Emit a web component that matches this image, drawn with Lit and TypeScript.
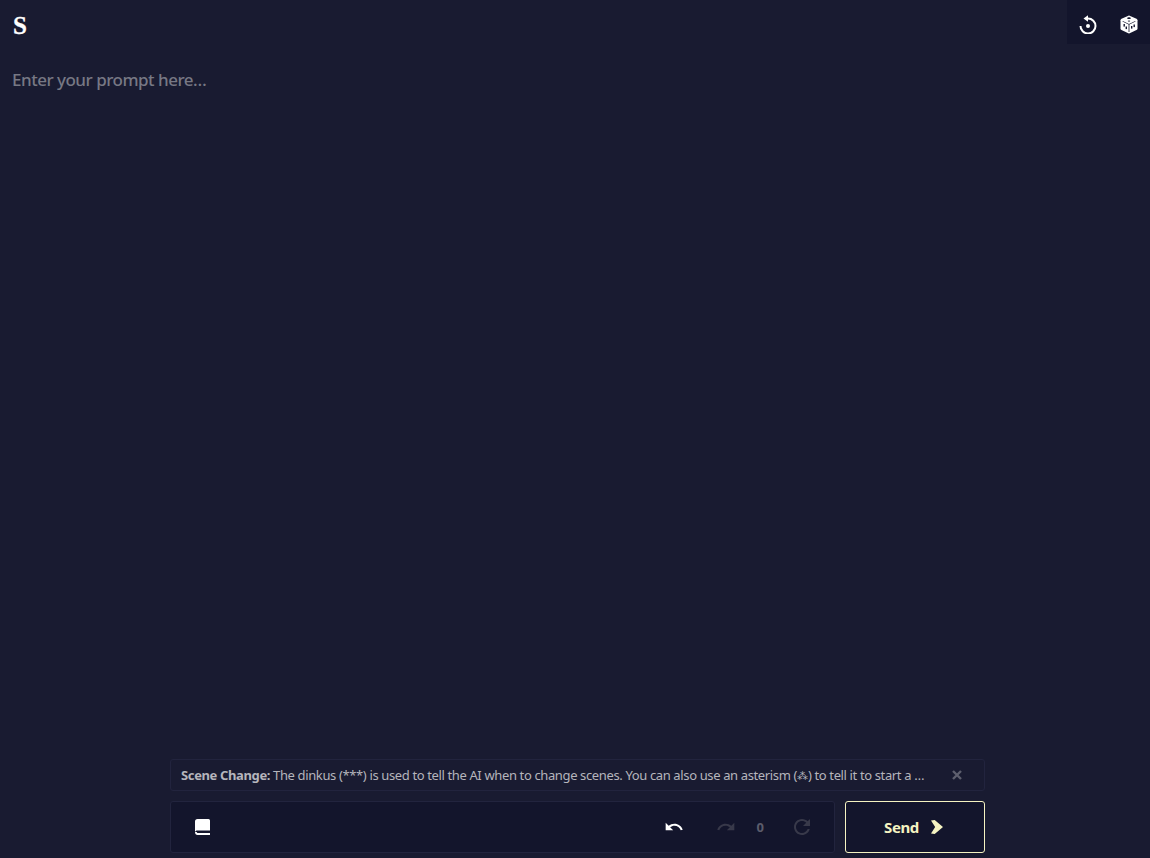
import { LitElement, html, css } from "lit";
import { customElement } from "lit/decorators.js";

@customElement("app-root")
export class AppRoot extends LitElement {
  static styles = css`
    :host {
      display: flex;
      flex-direction: column;
      height: 100vh;
      background: #191b31;
      font-family: "Noto Sans", "Lato", sans-serif;
      position: relative;
      overflow: hidden;
    }
    .logo {
      font-family: "Liberation Serif", serif;
      font-weight: 700;
      font-size: 25px;
      line-height: 28px;
      color: #fff;
      -webkit-text-stroke: 0.3px #fff;
      padding: 12px 0 0 13px;
      height: 40px;
      box-sizing: border-box;
    }
    .prompt {
      flex: 1;
      padding: 28px 12px 0;
      font-size: 17px;
      line-height: 24px;
      letter-spacing: -0.5px;
      font-weight: 500;
      color: #777884;
    }
    .tools {
      position: absolute;
      top: 0;
      right: 0;
      width: 83px;
      height: 44px;
      background: #13152c;
      display: flex;
      align-items: center;
      box-sizing: border-box;
      padding-top: 4px;
    }
    .tools span {
      flex: 1;
      display: flex;
      justify-content: center;
    }
    .dock {
      width: 815px;
      margin: 0 0 5px 170px;
      display: flex;
      flex-direction: column;
      gap: 10px;
    }
    .tip {
      height: 32px;
      box-sizing: border-box;
      border: 1px solid #22243e;
      border-radius: 3px;
      display: flex;
      align-items: center;
      padding: 0 22px 0 10px;
      font-size: 13px;
      letter-spacing: -0.37px;
      color: #b5b5bc;
      gap: 22px;
    }
    .tip p {
      margin: 0;
      flex: 1;
      white-space: nowrap;
      overflow: hidden;
      text-overflow: ellipsis;
    }
    .tip b { font-weight: 700; }
    .mark { font-family: "DejaVu Sans", sans-serif; font-size: 11px; letter-spacing: 0; }
    .row { display: flex; gap: 10px; height: 52px; }
    .bar {
      flex: 1;
      background: #13152c;
      border: 1px solid #22243e;
      border-radius: 3px;
      display: flex;
      align-items: center;
      padding: 0 20px 0 24px;
      box-sizing: border-box;
    }
    .spacer { flex: 1; }
    .count {
      font-size: 13px;
      font-weight: 700;
      color: #5b5c6b;
      margin: 0 26px 0 21px;
    }
    .send {
      width: 140px;
      background: #13152c;
      border: 1px solid #f5f3c2;
      border-radius: 3px;
      box-sizing: border-box;
      display: flex;
      align-items: center;
      justify-content: center;
      gap: 12px;
      padding-right: 3px;
      color: #f5f3c2;
      font-size: 15px;
      letter-spacing: -0.4px;
      font-weight: 700;
    }
    svg { display: block; }
    .undo { margin-right: 32px; }
  `;

  render() {
    return html`
      <div class="logo">S</div>
      <div class="prompt">Enter your prompt here…</div>
      <div class="tools">
        <span>
          <svg width="18" height="19" viewBox="0 0 18 19" fill="none" stroke="#fff" stroke-width="2">
            <path d="M9 3.500A7.500 7.500 0 1 1 1.500 11" />
            <path d="M9 .2 4.500 3.500 9 6.800z" fill="#fff" stroke="none" />
            <circle cx="9" cy="11" r="2" fill="#fff" stroke="none" />
          </svg>
        </span>
        <span>
          <svg width="18" height="19" viewBox="0 0 18 19">
            <path d="M9 .5 16.500 3.800Q17.500 4.300 17.500 5.300V13.500Q17.500 14.500 16.500 15L9.700 18.300Q9 18.600 8.300 18.300L1.500 15Q.5 14.500 .5 13.500V5.300Q.5 4.300 1.500 3.800z" fill="#fff" />
            <g fill="#13152c">
              <path d="M2.800 6 9 9l6.200-3 .3.600L9.400 9.600V17h-.8V9.600L2.500 6.600z" />
              <ellipse cx="9" cy="3.200" rx="1.800" ry=".9" />
              <ellipse cx="9" cy="6" rx="1.200" ry=".6" />
              <rect x="3.500" y="9" width="1.400" height="2.600" />
              <rect x="5.600" y="11.500" width="1.400" height="2.600" />
              <rect x="11" y="11" width="1.400" height="2.600" />
              <rect x="13.500" y="9.500" width="1.400" height="2.600" />
            </g>
          </svg>
        </span>
      </div>
      <div class="dock">
        <div class="tip">
          <p><b>Scene Change:</b> The dinkus (***) is used to tell the AI when to change scenes. You can also use an asterism (<span class="mark">⁂</span>) to tell it to start a new scene entirely.</p>
          <svg width="10" height="10" viewBox="0 0 10 10" stroke="#5e5f6e" stroke-width="2.400"><path d="M1 1l8 8M9 1l-8 8" /></svg>
        </div>
        <div class="row">
          <div class="bar">
            <svg width="15" height="16" viewBox="0 0 15 16" fill="#fff">
              <path d="M2.500 0h11A1.500 1.500 0 0 1 15 1.500V11.500H2.500C1.200 11.500 .7 12 .5 12.500H0V2.500A2.500 2.500 0 0 1 2.500 0z" />
              <path d="M0 13C0 14.800 1 16 2.500 16H15V14H3C2.200 14 1.800 13.600 1.800 13z" />
            </svg>
            <div class="spacer"></div>
            <svg class="undo" width="20" height="20" viewBox="0 0 24 24" fill="#fff"><path d="M12.500 8c-2.650 0-5.050.99-6.900 2.600L2 7v9h9l-3.620-3.620c1.390-1.160 3.160-1.880 5.120-1.880 3.540 0 6.550 2.310 7.600 5.500l2.370-.78C21.080 11.030 17.150 8 12.500 8z" /></svg>
            <svg width="20" height="20" viewBox="0 0 24 24" fill="#38394a"><path d="M18.400 10.600C16.550 8.990 14.150 8 11.500 8c-4.650 0-8.580 3.030-9.960 7.220L3.900 16c1.050-3.190 4.050-5.500 7.600-5.500 1.950 0 3.730.72 5.120 1.880L13 16h9V7l-3.600 3.600z" /></svg>
            <span class="count">0</span>
            <svg width="24" height="24" viewBox="0 0 24 24" fill="#38394a"><path d="M17.650 6.350C16.200 4.900 14.210 4 12 4c-4.420 0-7.990 3.580-7.990 8s3.570 8 7.990 8c3.730 0 6.840-2.550 7.730-6h-2.080c-.82 2.330-3.040 4-5.650 4-3.310 0-6-2.690-6-6s2.690-6 6-6c1.660 0 3.140.69 4.220 1.780L13 11h7V4l-2.350 2.350z" /></svg>
          </div>
          <div class="send">
            Send
            <svg width="12" height="14" viewBox="0 0 13 15" fill="#f5f3c2"><path d="M0 .5 4 0l9 7.500L4 15l-4-.5 4.500-7z" /></svg>
          </div>
        </div>
      </div>
    `;
  }
}
